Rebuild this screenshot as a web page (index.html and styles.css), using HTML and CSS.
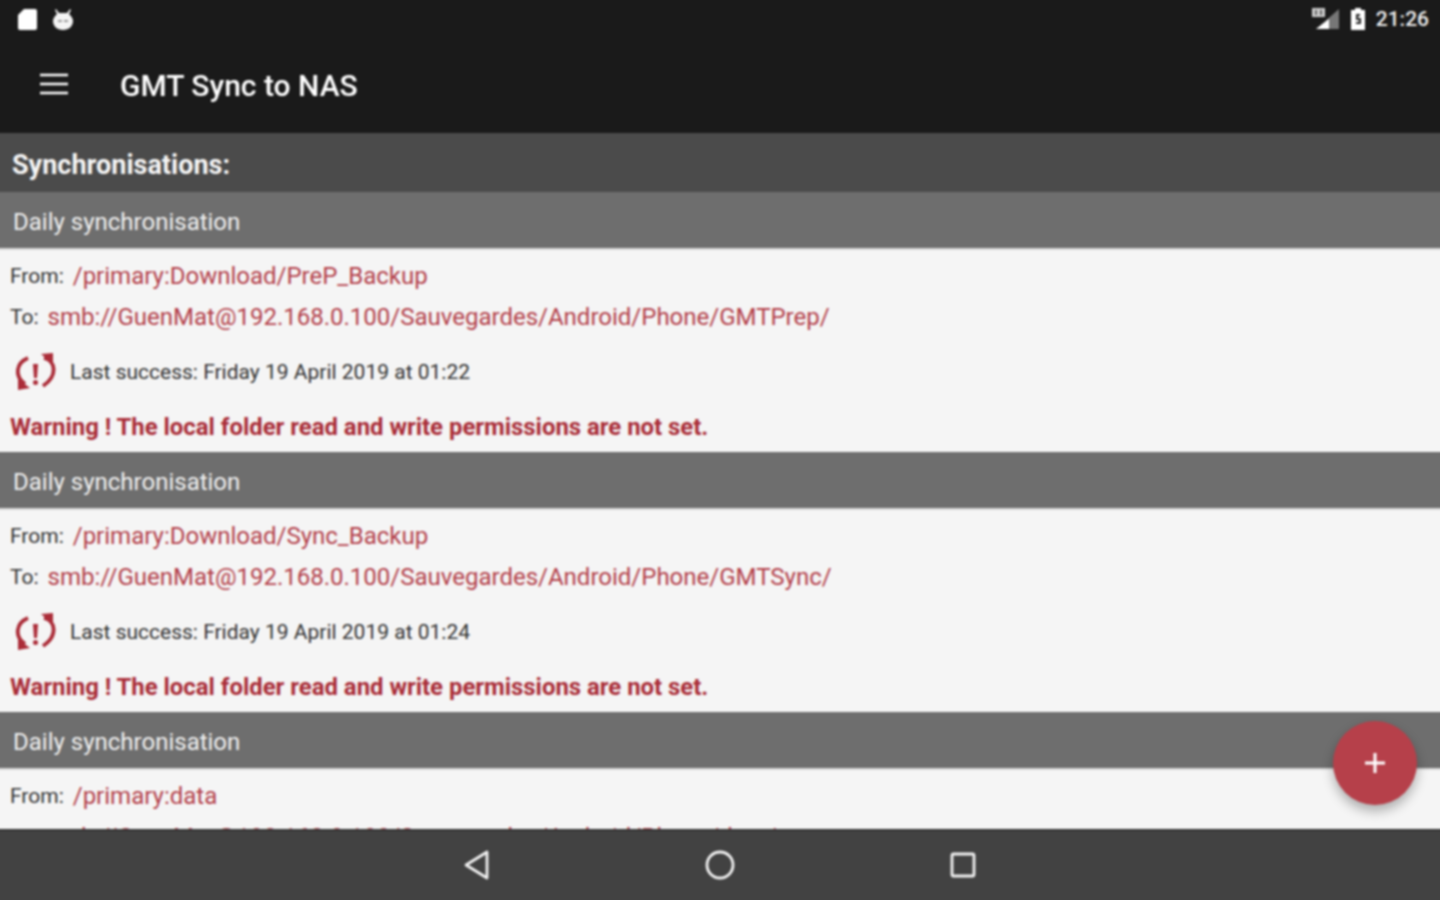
FILE: index.html
```html
<!DOCTYPE html>
<html lang="en">
<head>
<meta charset="utf-8">
<title>GMT Sync to NAS</title>
<link rel="stylesheet" href="styles.css">
</head>
<body>
<div class="screen">
  <header class="appbar">
    <div class="status">
      <div class="status-left">
        <svg width="22" height="24" viewBox="0 0 22 24"><path d="M8 2h11a2 2 0 0 1 2 2v17a2 2 0 0 1-2 2H4a2 2 0 0 1-2-2V8z" fill="#fff"/></svg>
        <svg width="24" height="24" viewBox="0 0 24 24"><path d="M5 2l3 4h8l3-4 1 1-2 4c2 2 4 4 4 7 0 5-4 9-10 9S2 19 2 14c0-3 2-5 4-7L4 3z" fill="#f4f4f4"/><path d="M7 14h4M13 14h4" stroke="#9a9a9a" stroke-width="2"/></svg>
      </div>
      <div class="status-right">
        <svg width="30" height="24" viewBox="0 0 30 24"><path d="M29 2v20H6z" fill="#777"/><path d="M19 12v10H6z" fill="#fff"/><rect x="2" y="1" width="13" height="9" fill="#ccc"/><path d="M6 3v5M11 3v5" stroke="#444" stroke-width="1.500"/></svg>
        <svg width="16" height="26" viewBox="0 0 16 26"><path d="M5 2h6v2h4v20H1V4h4z" fill="#fff"/><path d="M10 9H7v4h3v4H6" fill="none" stroke="#222" stroke-width="2"/></svg>
        <span class="clock">21:26</span>
      </div>
    </div>
    <div class="toolbar">
      <svg class="menu" width="30" height="22" viewBox="0 0 30 22"><path d="M1 2h28M1 11h28M1 20h28" stroke="#fff" stroke-width="2.600"/></svg>
      <h1 class="title">GMT Sync to NAS</h1>
    </div>
  </header>

  <main class="content">
    <h2 class="section">Synchronisations:</h2>

    <section class="sync">
      <h3 class="sync-head">Daily synchronisation</h3>
      <div class="sync-body">
        <p class="path"><span class="label">From:</span><span class="value">/primary:Download/PreP_Backup</span></p>
        <p class="path"><span class="label">To:</span><span class="value">smb://GuenMat@192.168.0.100/Sauvegardes/Android/Phone/GMTPrep/</span></p>
        <div class="state">
          <svg class="sync-ic" width="44" height="38" viewBox="0 0 44 38"><g fill="none" stroke="#ab2c38" stroke-width="3.800"><path d="M15 5C3 10 1 23 12 31"/><path d="M31 5c12 3 14 18 -1 28"/></g><path d="M5 26l12 9-12 2zM28 1l12-1v11z" fill="#ab2c38"/><path d="M20 11h5l-1 14h-3z" fill="#ab2c38"/><circle cx="22.500" cy="29.500" r="2.500" fill="#ab2c38"/></svg>
          <span class="last">Last success: Friday 19 April 2019 at 01:22</span>
        </div>
        <p class="warn">Warning ! The local folder read and write permissions are not set.</p>
      </div>
    </section>

    <section class="sync">
      <h3 class="sync-head">Daily synchronisation</h3>
      <div class="sync-body">
        <p class="path"><span class="label">From:</span><span class="value">/primary:Download/Sync_Backup</span></p>
        <p class="path"><span class="label">To:</span><span class="value">smb://GuenMat@192.168.0.100/Sauvegardes/Android/Phone/GMTSync/</span></p>
        <div class="state">
          <svg class="sync-ic" width="44" height="38" viewBox="0 0 44 38"><g fill="none" stroke="#ab2c38" stroke-width="3.800"><path d="M15 5C3 10 1 23 12 31"/><path d="M31 5c12 3 14 18 -1 28"/></g><path d="M5 26l12 9-12 2zM28 1l12-1v11z" fill="#ab2c38"/><path d="M20 11h5l-1 14h-3z" fill="#ab2c38"/><circle cx="22.500" cy="29.500" r="2.500" fill="#ab2c38"/></svg>
          <span class="last">Last success: Friday 19 April 2019 at 01:24</span>
        </div>
        <p class="warn">Warning ! The local folder read and write permissions are not set.</p>
      </div>
    </section>

    <section class="sync">
      <h3 class="sync-head">Daily synchronisation</h3>
      <div class="sync-body">
        <p class="path"><span class="label">From:</span><span class="value">/primary:data</span></p>
        <p class="path"><span class="label">To:</span><span class="value">smb://GuenMat@192.168.0.100/Sauvegardes/Android/Phone/data/</span></p>
      </div>
    </section>

    <button class="fab" type="button" aria-label="Add">
      <svg width="24" height="24" viewBox="0 0 24 24"><path d="M12 2v20M2 12h20" stroke="#fff" stroke-width="3"/></svg>
    </button>
  </main>

  <nav class="navbar">
    <svg width="28" height="32" viewBox="0 0 28 32"><path d="M24 3v26L3 16z" fill="none" stroke="#f2f2f2" stroke-width="2.800" stroke-linejoin="round"/></svg>
    <svg width="32" height="32" viewBox="0 0 32 32"><circle cx="16" cy="16" r="13" fill="none" stroke="#f2f2f2" stroke-width="2.800"/></svg>
    <svg width="28" height="28" viewBox="0 0 28 28"><rect x="3" y="3" width="22" height="22" rx="1.500" fill="none" stroke="#f2f2f2" stroke-width="2.800"/></svg>
  </nav>
</div>
</body>
</html>
```

FILE: styles.css
```css
* { box-sizing: border-box; }
html, body { margin: 0; padding: 0; }
body {
  width: 1440px;
  height: 900px;
  overflow: hidden;
  font-family: Roboto, "Liberation Sans", sans-serif;
  background: #424242;
}
/* The screen bleeds 4px past the viewport so the soft focus does not fade at the edges. */
.screen {
  width: 1448px;
  height: 908px;
  margin: -4px;
  display: flex;
  flex-direction: column;
  filter: blur(0.8px);
}
.appbar {
  height: 137px;
  flex: none;
  padding-top: 4px;
  background: #1a1a1a;
  color: #fff;
}
.status {
  height: 37px;
  display: flex;
  align-items: center;
  justify-content: space-between;
  padding: 0 15px 0 20px;
}
.status-left, .status-right { display: flex; align-items: center; }
.status-left { gap: 13px; }
.status-right { gap: 10px; }
.clock { padding-top: 1px; font-size: 21px; font-weight: 500; color: #f0f0f0; }
.toolbar {
  height: 96px;
  display: flex;
  align-items: center;
  padding: 0 0 2px 43px;
}
.menu { flex: none; margin-right: 51px; }
.title { margin: 0; padding-top: 4px; font-size: 30px; font-weight: 500; line-height: 40px; }
.content {
  position: relative;
  flex: 1;
  overflow: hidden;
  background: #f5f5f5;
  min-height: 0;
}
.section {
  margin: 0;
  height: 59px;
  padding: 5px 16px 0;
  display: flex;
  align-items: center;
  background: #4b4b4b;
  color: #f5f5f5;
  font-size: 27px;
  font-weight: 700;
}
.sync-head {
  margin: 0;
  height: 58px;
  padding: 3px 17px 0;
  display: flex;
  align-items: center;
  background: #6e6e6e;
  color: #f0f0f0;
  font-size: 24px;
  font-weight: 400;
  border-bottom: 2px solid #d8d8d8;
}
.sync-body {
  height: 202px;
  padding: 5px 14px 0;
  background: #f5f5f5;
}
.path {
  margin: 0;
  height: 41px;
  display: flex;
  align-items: center;
  gap: 9px;
}
.label { font-size: 21px; color: #333; }
.value { font-size: 24px; color: #b3404a; }
.state {
  height: 69px;
  display: flex;
  align-items: center;
  gap: 13px;
  padding-left: 3px;
}
.sync-ic { flex: none; }
.last { font-size: 21px; color: #333; }
.warn {
  margin: 0;
  height: 42px;
  display: flex;
  align-items: center;
  font-size: 23.900px;
  font-weight: 700;
  color: #a92c37;
}
.fab {
  position: absolute;
  top: 588px;
  left: 1337px;
  width: 84px;
  height: 84px;
  padding: 0;
  border: 0;
  border-radius: 50%;
  background: #b6404a;
  display: flex;
  align-items: center;
  justify-content: center;
  box-shadow: 0 6px 12px rgba(0, 0, 0, 0.3);
}
.navbar {
  height: 75px;
  flex: none;
  display: flex;
  align-items: center;
  justify-content: center;
  gap: 213px;
  padding-bottom: 6px;
  background: #424242;
  border-top: 2px solid #333;
}
```
